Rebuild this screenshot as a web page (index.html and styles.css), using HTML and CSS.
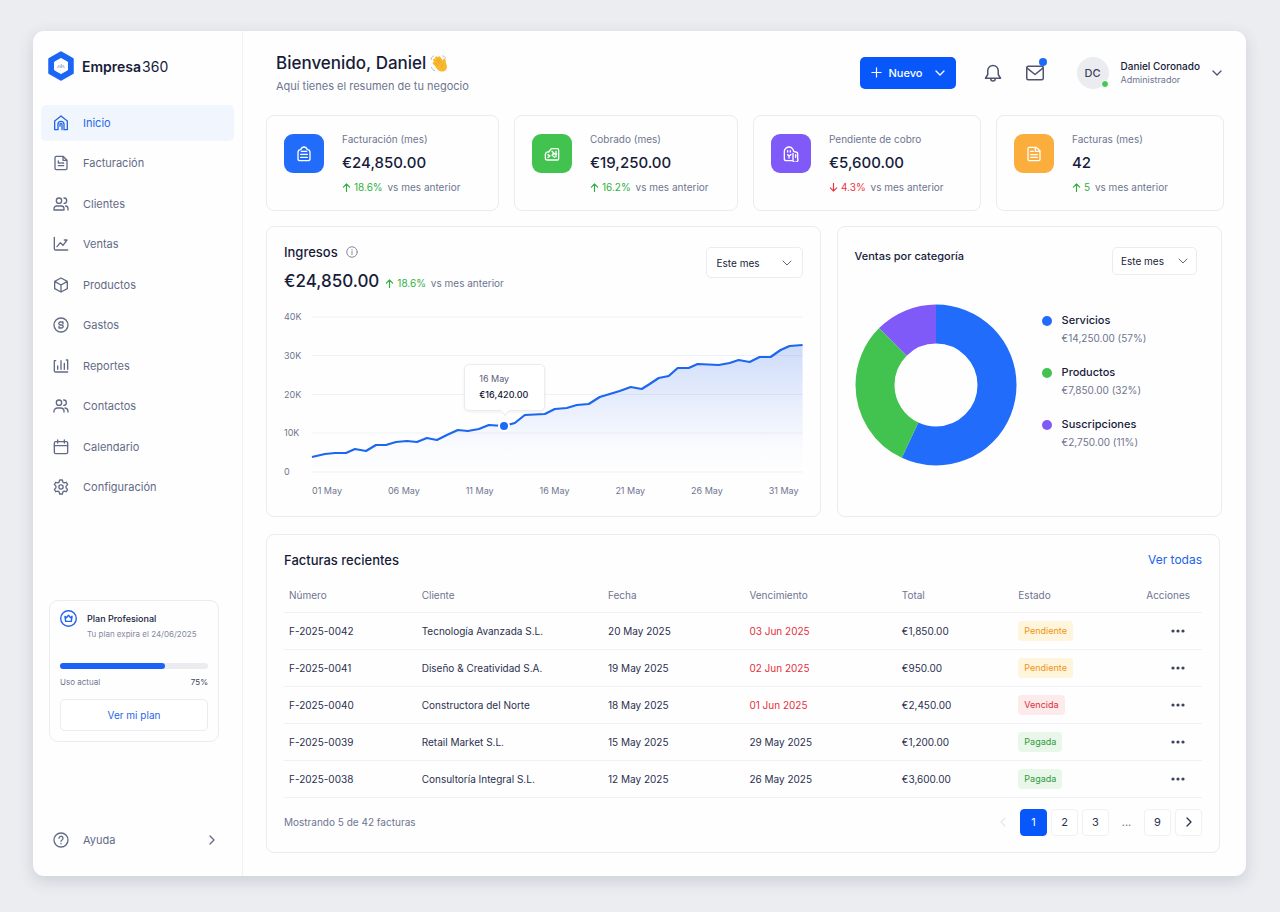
FILE: index.html
```html
<!DOCTYPE html>
<html lang="es">

<head>
    <meta charset="UTF-8">
    <meta name="viewport" content="width=device-width, initial-scale=1.0">
    <title>Empresa360 - Inicio</title>
    <link rel="stylesheet" href="styles.css">
</head>

<body>
    <div class="app">
        <aside class="sidebar">
            <a href="#" class="brand">
                <svg class="brand-logo" viewBox="0 0 26 30">
                    <path d="M13 1.500 24.500 8v14L13 28.500 1.500 22V8z" fill="#1b66f5" stroke="#1b66f5" stroke-width="2.500" stroke-linejoin="round" />
                    <path d="M13 7.500 19.500 11v8L13 22.500 6.500 19v-8z" fill="#fff" stroke="#fff" stroke-linejoin="round" />
                    <path d="M9 17l2-3v3m1 0 1.500-4v4m1.500 0v-3l1.500 3" fill="none" stroke="#b9bfd6" />
                </svg>
                <span class="brand-name"><strong>Empresa</strong>360</span>
            </a>

            <nav class="nav">
                <a href="#" class="nav-item active">
                    <svg class="icon" viewBox="0 0 24 24"><path d="M2.500 9 12 1.500 21.500 9v13h-5v-8a4.500 4.500 0 0 0-9 0v8h-5z" /><path d="M10.500 17v-3a1.500 1.500 0 0 1 3 0v8" /></svg>
                    Inicio
                </a>
                <a href="#" class="nav-item">
                    <svg class="icon" viewBox="0 0 24 24"><path d="M15 2H5a2 2 0 0 0-2 2v16a2 2 0 0 0 2 2h14a2 2 0 0 0 2-2V8zM15 2v6h6M8 9v3h3M8 16h8M13 12h3" /></svg>
                    Facturación
                </a>
                <a href="#" class="nav-item">
                    <svg class="icon" viewBox="0 0 24 24"><circle cx="9" cy="7" r="4" /><path d="M1.500 21v-2a4 4 0 0 1 4-4h7a4 4 0 0 1 4 4v2zM16.500 3a4 4 0 0 1 0 8M19 15a4 4 0 0 1 3.500 4v2" /></svg>
                    Clientes
                </a>
                <a href="#" class="nav-item">
                    <svg class="icon" viewBox="0 0 24 24"><path d="M2 2v17a2 2 0 0 0 2 2h18M6 16l5-6 4 4 6-8M17 6h4" /></svg>
                    Ventas
                </a>
                <a href="#" class="nav-item">
                    <svg class="icon" viewBox="0 0 24 24"><path d="M12 1.500 21.500 6.500v11L12 22.500l-9.500-5v-11zM2.500 6.500 12 12l9.500-5.500M12 12v10.500" /></svg>
                    Productos
                </a>
                <a href="#" class="nav-item">
                    <svg class="icon" viewBox="0 0 24 24"><circle cx="12" cy="12" r="10.500" /><path d="M15 7.500h-4a2 2 0 0 0 0 4.500h2a2 2 0 0 1 0 4.500H9M15 7.500V10M9 14v2.500" /></svg>
                    Gastos
                </a>
                <a href="#" class="nav-item">
                    <svg class="icon" viewBox="0 0 24 24"><path d="M4 4H2v15a2 2 0 0 0 2 2h18M7 17v-5M12 17V4M17 17V8M22 17V3h-2" /></svg>
                    Reportes
                </a>
                <a href="#" class="nav-item">
                    <svg class="icon" viewBox="0 0 24 24"><circle cx="9" cy="7" r="4" /><path d="M1.500 21v-1a5 5 0 0 1 5-5h5a5 5 0 0 1 5 5v1M16 3a4 4 0 0 1 0 8M18 15a5 5 0 0 1 4.500 5v1" /></svg>
                    Contactos
                </a>
                <a href="#" class="nav-item">
                    <svg class="icon" viewBox="0 0 24 24"><rect x="2" y="4" width="20" height="18" rx="2" /><path d="M2 10h20M7 1.500V6M17 1.500V6" /></svg>
                    Calendario
                </a>
                <a href="#" class="nav-item">
                    <svg class="icon" viewBox="0 0 24 24"><path d="M10 1.500h4l.8 3.200 2 1.100 3.100-.9 2 3.500-2.300 2.300v2.600l2.300 2.300-2 3.500-3.100-.9-2 1.100-.8 3.200h-4l-.8-3.200-2-1.100-3.100.9-2-3.500 2.300-2.300v-2.600L2.100 8.400l2-3.500 3.100.9 2-1.100z" /><circle cx="12" cy="12" r="3.200" /></svg>
                    Configuración
                </a>
            </nav>

            <div class="plan">
                <div class="plan-top">
                    <svg class="plan-icon" viewBox="0 0 24 24"><circle cx="12" cy="12" r="11" /><path d="M7 9l2 2 3-3.500L15 11l2-2-1 7H8z" /></svg>
                    <div>
                        <div class="plan-name">Plan Profesional</div>
                        <div class="plan-date">Tu plan expira el 24/06/2025</div>
                    </div>
                </div>
                <div class="plan-bar"><div class="plan-fill"></div></div>
                <div class="plan-usage"><span>Uso actual</span><span class="plan-percent">75%</span></div>
                <button type="button" class="plan-button">Ver mi plan</button>
            </div>

            <a href="#" class="help">
                <svg class="icon" viewBox="0 0 24 24"><circle cx="12" cy="12" r="10.500" /><path d="M9 9.500a3 3 0 1 1 4.500 2.500c-1 .6-1.500 1-1.500 2M12 17v.5" /></svg>
                <span>Ayuda</span>
                <svg class="chevron help-arrow" viewBox="0 0 10 10"><path d="M3 1l4 4-4 4" /></svg>
            </a>
        </aside>

        <main class="main">
            <header class="header">
                <div class="welcome">
                    <h1>Bienvenido, Daniel
                        <svg class="wave" viewBox="0 0 24 24">
                            <g fill="none" stroke="#f9b92f" stroke-width="3.400" stroke-linecap="round">
                                <path d="M12 14 5.500 7.500M14 12 8 4.800M16 11l-4.500-6.500M9.500 16 5 11.500M18.500 14 18 7.500" />
                            </g>
                            <path d="M8 14l7-6 5 3c2 4 2 8-1 10s-7 1.500-9.500-1.500L6.500 16z" fill="#f9b92f" />
                            <path d="M7.500 7 12 12M10 5.500l4 5.500M6.500 11l4 4M17 12c-2 1-2.500 3-2 5" fill="none" stroke="#e08f1c" stroke-width=".7" />
                            <path d="M1.500 7c0-2 1-3.500 3-4.500M16 2.500c2 .3 3 1 3.500 2.500M2 17c.5 2 2 3.500 4 4" fill="none" stroke="#9aa2ae" stroke-linecap="round" />
                        </svg>
                    </h1>
                    <p>Aquí tienes el resumen de tu negocio</p>
                </div>
                <button type="button" class="new-button">
                    <svg class="plus" viewBox="0 0 12 12"><path d="M6 1v10M1 6h10" /></svg>
                    Nuevo
                    <svg class="chevron" viewBox="0 0 10 10"><path d="M1 3l4 4 4-4" /></svg>
                </button>
                <button type="button" class="icon-button" aria-label="Notificaciones">
                    <svg class="icon" viewBox="0 0 24 24"><path d="M12 2a7 7 0 0 0-7 7v5l-3 5h20l-3-5V9a7 7 0 0 0-7-7zM9 19.500a3 3 0 0 0 6 0" /></svg>
                </button>
                <button type="button" class="icon-button" aria-label="Mensajes">
                    <svg class="icon" viewBox="0 0 24 24"><rect x="1" y="3" width="22" height="18" rx="2" /><path d="M1.500 5.500 12 14l10.500-8.500" /></svg>
                    <span class="mail-dot"></span>
                </button>
                <button type="button" class="user">
                    <span class="avatar">DC<span class="online"></span></span>
                    <span class="user-text">
                        <span class="user-name">Daniel Coronado</span>
                        <span class="user-role">Administrador</span>
                    </span>
                    <svg class="chevron" viewBox="0 0 10 10"><path d="M1 3l4 4 4-4" /></svg>
                </button>
            </header>

            <section class="stats">
                <article class="card stat">
                    <div class="stat-icon blue"><svg viewBox="0 0 24 24"><path d="M7 5.500A4 4 0 0 0 3 9v10a3 3 0 0 0 3 3h12a3 3 0 0 0 3-3V9a4 4 0 0 0-4-3.500C16 3 14.500 1.500 12 1.500S8 3 7 5.500zM8 8h8M7 12.500h10M7 17h10" /></svg></div>
                    <div>
                        <div class="stat-label">Facturación (mes)</div>
                        <div class="stat-value">€24,850.00</div>
                        <div class="delta"><span class="up"><svg class="arrow" viewBox="0 0 10 10"><path d="M5 9.500V1M1.500 4.500 5 1l3.500 3.500" /></svg>18.6%</span> vs mes anterior</div>
                    </div>
                </article>
                <article class="card stat">
                    <div class="stat-icon green"><svg viewBox="0 0 24 24"><path d="M7 9l4-5h9a2 2 0 0 1 2 2v13a2 2 0 0 1-2 2H5a3 3 0 0 1-3-3v-5a4 4 0 0 1 5-4zM6 13l3 2-3 2M12 8l3 3-3 3 4 3M18 8v8M13 12h6" /></svg></div>
                    <div>
                        <div class="stat-label">Cobrado (mes)</div>
                        <div class="stat-value">€19,250.00</div>
                        <div class="delta"><span class="up"><svg class="arrow" viewBox="0 0 10 10"><path d="M5 9.500V1M1.500 4.500 5 1l3.500 3.500" /></svg>16.2%</span> vs mes anterior</div>
                    </div>
                </article>
                <article class="card stat">
                    <div class="stat-icon purple"><svg viewBox="0 0 24 24"><path d="M15 22H5a3 3 0 0 1-3-3V9a7 7 0 0 1 14-1l3 1a3 3 0 0 1 3 3v7a3 3 0 0 1-7 3V11M7 7v2M11 7v2M7 13l2 2 3-2M9 15v3M19 13v4" /></svg></div>
                    <div>
                        <div class="stat-label">Pendiente de cobro</div>
                        <div class="stat-value">€5,600.00</div>
                        <div class="delta"><span class="down"><svg class="arrow" viewBox="0 0 10 10"><path d="M5 .5V9M1.500 5.500 5 9l3.500-3.500" /></svg>4.3%</span> vs mes anterior</div>
                    </div>
                </article>
                <article class="card stat">
                    <div class="stat-icon orange"><svg viewBox="0 0 24 24"><path d="M15 2H5a2 2 0 0 0-2 2v16a2 2 0 0 0 2 2h14a2 2 0 0 0 2-2V7zM14 2v6h6M7 8h4M7 13h10M7 17h10" /></svg></div>
                    <div>
                        <div class="stat-label">Facturas (mes)</div>
                        <div class="stat-value">42</div>
                        <div class="delta"><span class="up"><svg class="arrow" viewBox="0 0 10 10"><path d="M5 9.500V1M1.500 4.500 5 1l3.500 3.500" /></svg>5</span> vs mes anterior</div>
                    </div>
                </article>
            </section>

            <section class="charts">
                <article class="card income">
                    <div class="card-head">
                        <div>
                            <h2>Ingresos
                                <svg class="info" viewBox="0 0 24 24"><circle cx="12" cy="12" r="10.500" /><path d="M12 11v6M12 7v1" /></svg>
                            </h2>
                            <div class="income-total">
                                <span class="income-value">€24,850.00</span>
                                <span class="delta"><span class="up"><svg class="arrow" viewBox="0 0 10 10"><path d="M5 9.500V1M1.500 4.500 5 1l3.500 3.500" /></svg>18.6%</span> vs mes anterior</span>
                            </div>
                        </div>
                        <select class="select" aria-label="Periodo de ingresos">
                            <option>Este mes</option>
                        </select>
                    </div>
                    <div class="chart">
                        <div class="y-axis"><span>40K</span><span>30K</span><span>20K</span><span>10K</span><span>0</span></div>
                        <div class="plot">
                            <svg class="plot-svg" viewBox="0 0 491 155" preserveAspectRatio="none">
                                <defs>
                                    <linearGradient id="area" x1="0" y1="0" x2="0" y2="1">
                                        <stop offset="0" stop-color="#2563eb" stop-opacity=".22" />
                                        <stop offset=".8" stop-color="#2563eb" stop-opacity="0.02" />
                                        <stop offset="1" stop-color="#2563eb" stop-opacity="0" />
                                    </linearGradient>
                                </defs>
                                <path class="grid-line" d="M0 0H491M0 38.500H491M0 77.500H491M0 116H491M0 155H491" />
                                <path fill="url(#area)" d="M0 140 13 137 23 136 34 136 43 132 54 134 64 128 74 128 84 125 95 124 105 125 115 121 125 123 135 118 146 113 156 114 167 112 177 108 192 109 203 106 213 98 233 97 243 92 255 91 265 88 277 87 288 80 308 74 319 70 330 72 338 67 347 61 357 59 366 51 377 51 386 47 407 48 418 46 427 43 438 45 448 40 459 40 469 33 478 29 491 28V155H0z" />
                                <path class="line" d="M0 140 13 137 23 136 34 136 43 132 54 134 64 128 74 128 84 125 95 124 105 125 115 121 125 123 135 118 146 113 156 114 167 112 177 108 192 109 203 106 213 98 233 97 243 92 255 91 265 88 277 87 288 80 308 74 319 70 330 72 338 67 347 61 357 59 366 51 377 51 386 47 407 48 418 46 427 43 438 45 448 40 459 40 469 33 478 29 491 28" />
                            </svg>
                            <div class="point"></div>
                            <div class="tooltip"><span>16 May</span><strong>€16,420.00</strong></div>
                        </div>
                    </div>
                    <div class="x-axis"><span>01 May</span><span>06 May</span><span>11 May</span><span>16 May</span><span>21 May</span><span>26 May</span><span>31 May</span></div>
                </article>

                <article class="card categories">
                    <div class="card-head">
                        <h2 class="small-title">Ventas por categoría</h2>
                        <select class="select select-small" aria-label="Periodo de ventas">
                            <option>Este mes</option>
                        </select>
                    </div>
                    <div class="donut-row">
                        <svg class="donut" viewBox="0 0 162 162">
                            <g fill="none" stroke-width="39" transform="rotate(-90 81 81)">
                                <circle cx="81" cy="81" r="61" pathLength="1000" stroke="#226cfb" stroke-dasharray="570 430" />
                                <circle cx="81" cy="81" r="61" pathLength="1000" stroke="#42c34f" stroke-dasharray="305 695" stroke-dashoffset="-570" />
                                <circle cx="81" cy="81" r="61" pathLength="1000" stroke="#805af8" stroke-dasharray="125 875" stroke-dashoffset="-875" />
                            </g>
                        </svg>
                        <ul class="legend">
                            <li><span class="dot blue"></span><div>Servicios<small>€14,250.00 (57%)</small></div></li>
                            <li><span class="dot green"></span><div>Productos<small>€7,850.00 (32%)</small></div></li>
                            <li><span class="dot purple"></span><div>Suscripciones<small>€2,750.00 (11%)</small></div></li>
                        </ul>
                    </div>
                </article>
            </section>

            <section class="card invoices">
                <div class="invoices-head">
                    <h2>Facturas recientes</h2>
                    <a href="#">Ver todas</a>
                </div>
                <table>
                    <thead>
                        <tr>
                            <th class="col-number">Número</th>
                            <th class="col-client">Cliente</th>
                            <th class="col-date">Fecha</th>
                            <th class="col-due">Vencimiento</th>
                            <th class="col-total">Total</th>
                            <th class="col-status">Estado</th>
                            <th class="col-actions">Acciones</th>
                        </tr>
                    </thead>
                    <tbody>
                        <tr>
                            <td>F-2025-0042</td>
                            <td>Tecnología Avanzada S.L.</td>
                            <td>20 May 2025</td>
                            <td class="late">03 Jun 2025</td>
                            <td>€1,850.00</td>
                            <td><span class="badge pending">Pendiente</span></td>
                            <td><button type="button" class="more" aria-label="Acciones"><svg viewBox="0 0 14 4"><circle cx="2" cy="2" r="1.600" /><circle cx="7" cy="2" r="1.600" /><circle cx="12" cy="2" r="1.600" /></svg></button></td>
                        </tr>
                        <tr>
                            <td>F-2025-0041</td>
                            <td>Diseño &amp; Creatividad S.A.</td>
                            <td>19 May 2025</td>
                            <td class="late">02 Jun 2025</td>
                            <td>€950.00</td>
                            <td><span class="badge pending">Pendiente</span></td>
                            <td><button type="button" class="more" aria-label="Acciones"><svg viewBox="0 0 14 4"><circle cx="2" cy="2" r="1.600" /><circle cx="7" cy="2" r="1.600" /><circle cx="12" cy="2" r="1.600" /></svg></button></td>
                        </tr>
                        <tr>
                            <td>F-2025-0040</td>
                            <td>Constructora del Norte</td>
                            <td>18 May 2025</td>
                            <td class="late">01 Jun 2025</td>
                            <td>€2,450.00</td>
                            <td><span class="badge overdue">Vencida</span></td>
                            <td><button type="button" class="more" aria-label="Acciones"><svg viewBox="0 0 14 4"><circle cx="2" cy="2" r="1.600" /><circle cx="7" cy="2" r="1.600" /><circle cx="12" cy="2" r="1.600" /></svg></button></td>
                        </tr>
                        <tr>
                            <td>F-2025-0039</td>
                            <td>Retail Market S.L.</td>
                            <td>15 May 2025</td>
                            <td>29 May 2025</td>
                            <td>€1,200.00</td>
                            <td><span class="badge paid">Pagada</span></td>
                            <td><button type="button" class="more" aria-label="Acciones"><svg viewBox="0 0 14 4"><circle cx="2" cy="2" r="1.600" /><circle cx="7" cy="2" r="1.600" /><circle cx="12" cy="2" r="1.600" /></svg></button></td>
                        </tr>
                        <tr>
                            <td>F-2025-0038</td>
                            <td>Consultoría Integral S.L.</td>
                            <td>12 May 2025</td>
                            <td>26 May 2025</td>
                            <td>€3,600.00</td>
                            <td><span class="badge paid">Pagada</span></td>
                            <td><button type="button" class="more" aria-label="Acciones"><svg viewBox="0 0 14 4"><circle cx="2" cy="2" r="1.600" /><circle cx="7" cy="2" r="1.600" /><circle cx="12" cy="2" r="1.600" /></svg></button></td>
                        </tr>
                    </tbody>
                </table>
                <div class="invoices-foot">
                    <span>Mostrando 5 de 42 facturas</span>
                    <div class="pages">
                        <button type="button" class="page prev" aria-label="Anterior" disabled><svg class="chevron" viewBox="0 0 10 10"><path d="M7 1 3 5l4 4" /></svg></button>
                        <button type="button" class="page current">1</button>
                        <button type="button" class="page">2</button>
                        <button type="button" class="page">3</button>
                        <span class="page-gap">...</span>
                        <button type="button" class="page">9</button>
                        <button type="button" class="page" aria-label="Siguiente"><svg class="chevron" viewBox="0 0 10 10"><path d="M3 1l4 4-4 4" /></svg></button>
                    </div>
                </div>
            </section>
        </main>
    </div>
</body>

</html>
```
FILE: styles.css
```css
:root {
    --primary: #0757fb;
    --blue: #226cfb;
    --green: #42c34f;
    --purple: #805af8;
    --orange: #fbae3c;
    --text: #171c3a;
    --muted: #6e7591;
    --border: #ebecf1;
}

* {
    box-sizing: border-box;
}

body {
    margin: 0;
    padding: 31px 34px 36px 33px;
    min-height: 100vh;
    display: flex;
    background: #ebedf1;
    color: var(--text);
    font-family: Inter, "Liberation Sans", sans-serif;
    font-size: 10px;
}

h1,
h2,
p,
ul {
    margin: 0;
    padding: 0;
}

a {
    color: inherit;
    text-decoration: none;
}

button,
select {
    font-family: inherit;
    color: inherit;
    cursor: pointer;
}

svg {
    flex-shrink: 0;
}

.app {
    flex: 1;
    min-width: 0;
    display: flex;
    background: #fefefe;
    border-radius: 11px;
    box-shadow: 0 5px 16px rgba(40, 50, 80, 0.16);
}

.icon,
.info,
.plan-icon,
.plus,
.chevron,
.arrow,
.stat-icon svg {
    fill: none;
    stroke: currentColor;
    stroke-width: 2;
    stroke-linecap: round;
    stroke-linejoin: round;
}

.icon {
    width: 16px;
    height: 16px;
}

.chevron {
    width: 10px;
    height: 10px;
    stroke-width: 1.3;
}

.arrow {
    width: 9px;
    height: 9px;
    stroke-width: 1.3;
    margin: 0 3px -1px 0;
}

/* sidebar */
.sidebar {
    width: 210px;
    flex-shrink: 0;
    display: flex;
    flex-direction: column;
    padding: 20px 8px 26px;
    border-right: 1px solid #f0f1f5;
}

.brand {
    display: flex;
    align-items: center;
    gap: 8px;
    padding-left: 7px;
    margin-bottom: 24px;
}

.brand-logo {
    width: 26px;
    height: 30px;
}

.brand-name {
    font-size: 14px;
}

.brand-name strong {
    font-weight: 600;
    margin-right: 1px;
}

.nav {
    height: 400px;
    display: flex;
    flex-direction: column;
    justify-content: space-between;
}

.nav-item {
    display: flex;
    align-items: center;
    gap: 14px;
    height: 36px;
    padding: 0 12px;
    border-radius: 5px;
    font-size: 11px;
    color: #636a85;
}

.nav-item.active {
    background: #f1f6fe;
    color: #2566e8;
}

.plan {
    margin: 95px 15px 0 8px;
    padding: 9px 10px 10px;
    border: 1px solid var(--border);
    border-radius: 9px;
}

.plan-top {
    display: flex;
    gap: 10px;
}

.plan-icon {
    width: 17px;
    height: 17px;
    color: #2566e8;
}

.plan-name {
    font-size: 9px;
    font-weight: 500;
    line-height: 17px;
}

.plan-date {
    font-size: 8px;
    line-height: 15px;
    color: #858a9e;
    white-space: nowrap;
}

.plan-bar {
    margin-top: 21px;
    height: 6px;
    border-radius: 3px;
    background: #ececf0;
}

.plan-fill {
    width: 71%;
    height: 100%;
    border-radius: 3px;
    background: #1c62f7;
}

.plan-usage {
    display: flex;
    justify-content: space-between;
    margin: 6px 0 10px;
    font-size: 8px;
    line-height: 14px;
    color: var(--muted);
}

.plan-percent {
    color: #3d435c;
}

.plan-button {
    width: 100%;
    height: 32px;
    background: #fff;
    border: 1px solid var(--border);
    border-radius: 5px;
    font-size: 10px;
    color: #2566e8;
}

.help {
    display: flex;
    align-items: center;
    gap: 14px;
    margin-top: auto;
    padding: 2px 17px 2px 12px;
    font-size: 11px;
    color: #636a85;
}

.help-arrow {
    margin-left: auto;
}

/* header */
.main {
    flex: 1;
    min-width: 0;
    padding: 20px 24px 23px 23px;
}

.header {
    display: flex;
    align-items: center;
    padding: 0 0 21px 10px;
}

.welcome {
    margin-right: auto;
}

.welcome h1 {
    display: flex;
    align-items: center;
    gap: 4px;
    font-size: 17px;
    line-height: 25px;
    font-weight: 500;
}

.wave {
    width: 19px;
    height: 19px;
}

.welcome p {
    margin-top: 2px;
    font-size: 11px;
    line-height: 16px;
    color: var(--muted);
}

.new-button {
    display: flex;
    align-items: center;
    gap: 7px;
    height: 32px;
    padding: 0 11px;
    background: var(--primary);
    border: 0;
    border-radius: 5px;
    color: #fff;
    font-size: 11px;
    font-weight: 500;
}

.new-button .plus {
    width: 11px;
    height: 11px;
    stroke-width: 1.3;
}

.new-button .chevron {
    margin-left: 5px;
}

.icon-button {
    position: relative;
    display: flex;
    margin-left: 24px;
    padding: 0;
    background: none;
    border: 0;
    color: #4d546f;
}

.new-button + .icon-button {
    margin-left: 28px;
}

.icon-button .icon {
    width: 18px;
    height: 18px;
}

.mail-dot {
    position: absolute;
    top: -6px;
    right: -3px;
    width: 8px;
    height: 8px;
    border-radius: 50%;
    background: #1c6bf7;
}

.user {
    display: flex;
    align-items: center;
    gap: 12px;
    margin-left: 33px;
    padding: 0;
    background: none;
    border: 0;
    text-align: left;
}

.user .chevron {
    color: #4d546f;
}

.avatar {
    position: relative;
    width: 32px;
    height: 32px;
    border-radius: 50%;
    background: #ebecef;
    color: #3d435c;
    font-size: 11px;
    font-weight: 500;
    line-height: 32px;
    text-align: center;
}

.online {
    position: absolute;
    right: 0;
    bottom: 1px;
    width: 8px;
    height: 8px;
    border-radius: 50%;
    background: #47c65b;
    border: 1px solid #fff;
}

.user-text {
    font-size: 10px;
    line-height: 14px;
}

.user-name,
.user-role {
    display: block;
}

.user-name {
    font-weight: 500;
}

.user-role {
    font-size: 9px;
    color: var(--muted);
}

/* cards */
.card {
    border: 1px solid var(--border);
    border-radius: 8px;
    background: #fefefe;
}

.stats {
    display: grid;
    grid-template-columns: minmax(0, 233fr) minmax(0, 224fr) minmax(0, 228fr) minmax(0, 228fr);
    gap: 15px;
    margin-right: -2px;
}

.stat {
    display: flex;
    gap: 18px;
    padding: 15px 17px 14px;
    white-space: nowrap;
}

.stat-icon {
    display: flex;
    align-items: center;
    justify-content: center;
    flex-shrink: 0;
    width: 40px;
    height: 39px;
    margin-top: 3px;
    border-radius: 9px;
    color: #fff;
}

.stat-icon svg {
    width: 16px;
    height: 16px;
}

.blue {
    background: var(--blue);
}

.green {
    background: var(--green);
}

.purple {
    background: var(--purple);
}

.orange {
    background: var(--orange);
}

.stat-label {
    line-height: 16px;
    color: var(--muted);
}

.stat-value {
    margin: 4px 0;
    font-size: 15px;
    font-weight: 500;
    line-height: 24px;
}

.delta {
    line-height: 17px;
    color: var(--muted);
}

.up,
.down {
    margin-right: 2px;
    color: #30b03c;
}

.down {
    color: #ee3440;
}

.charts {
    display: grid;
    grid-template-columns: minmax(0, 554fr) minmax(0, 385fr);
    gap: 16px;
    margin: 15px 0 17px;
}

.card-head {
    display: flex;
    justify-content: space-between;
    align-items: flex-start;
}

.card h2 {
    display: flex;
    align-items: center;
    gap: 8px;
    font-size: 13px;
    font-weight: 500;
    line-height: 18px;
}

.income {
    padding: 16px 17px 18px;
}

.info {
    width: 12px;
    height: 12px;
    color: #858a9e;
}

.income-total {
    display: flex;
    align-items: baseline;
    gap: 6px;
    margin-top: 8px;
    line-height: 24px;
}

.income-value {
    font-size: 17px;
    font-weight: 500;
}

.select {
    appearance: none;
    width: 97px;
    height: 31px;
    margin-top: 4px;
    padding: 0 10px;
    border: 1px solid var(--border);
    border-radius: 5px;
    background: #fff url("data:image/svg+xml,%3Csvg xmlns='http://www.w3.org/2000/svg' viewBox='0 0 10 10'%3E%3Cpath d='M1 3l4 4 4-4' fill='none' stroke='%23606780' stroke-linecap='round'/%3E%3C/svg%3E") no-repeat right 10px center / 10px;
    font-size: 10px;
}

.chart {
    display: flex;
    margin-top: 24px;
    height: 155px;
}

.y-axis {
    width: 28px;
    flex-shrink: 0;
    display: flex;
    flex-direction: column;
    justify-content: space-between;
    margin: -6px 0;
    font-size: 9px;
    line-height: 12px;
    color: var(--muted);
}

.plot {
    position: relative;
    flex: 1;
}

.plot-svg {
    display: block;
    width: 100%;
    height: 100%;
    overflow: visible;
}

.grid-line {
    fill: none;
    stroke: #f0f1f4;
    vector-effect: non-scaling-stroke;
}

.line {
    fill: none;
    stroke: #1c66f0;
    stroke-width: 2.2;
    stroke-linejoin: round;
    vector-effect: non-scaling-stroke;
}

.point {
    position: absolute;
    left: 39.2%;
    top: 70%;
    width: 12px;
    height: 12px;
    margin: -6px;
    border: 2px solid #fff;
    border-radius: 50%;
    background: #1c6bf7;
}

.tooltip {
    position: absolute;
    left: 39.2%;
    bottom: 61px;
    width: 81px;
    margin-left: -40px;
    padding: 6px 0 7px 14px;
    background: #fff;
    border: 1px solid var(--border);
    border-radius: 5px;
    box-shadow: 0 1px 3px rgba(40, 50, 80, 0.08);
    font-size: 9px;
    line-height: 16px;
    color: #5a607a;
}

.tooltip::after {
    content: "";
    position: absolute;
    left: 50%;
    bottom: -4px;
    width: 7px;
    height: 7px;
    margin-left: -4px;
    background: #fff;
    border: solid var(--border);
    border-width: 0 1px 1px 0;
    transform: rotate(45deg);
}

.tooltip span,
.tooltip strong {
    display: block;
}

.tooltip strong {
    font-weight: 500;
    color: var(--text);
}

.x-axis {
    display: flex;
    justify-content: space-between;
    margin: 12px 4px 0 28px;
    font-size: 9px;
    line-height: 14px;
    color: var(--muted);
}

.categories {
    padding: 16px 24px 17px 17px;
}

.card .small-title {
    margin-top: 4px;
    font-size: 11px;
}

.select-small {
    width: 85px;
    height: 28px;
    padding: 0 8px;
    background-position: right 8px center;
}

.donut-row {
    display: flex;
    align-items: center;
    gap: 25px;
    margin-top: 29px;
}

.donut {
    width: 162px;
    height: 162px;
}

.legend {
    display: flex;
    flex-direction: column;
    gap: 17px;
    margin-bottom: 7px;
    list-style: none;
    font-size: 11px;
    font-weight: 500;
    line-height: 17px;
}

.legend li {
    display: flex;
    gap: 10px;
}

.legend small {
    display: block;
    font-size: 10px;
    font-weight: 400;
    line-height: 18px;
    color: var(--muted);
}

.dot {
    width: 10px;
    height: 10px;
    margin-top: 4px;
    border-radius: 50%;
}

/* invoices */
.invoices {
    padding: 16px 17px;
    margin-right: 2px;
}

.invoices-head {
    display: flex;
    justify-content: space-between;
    align-items: center;
    margin-bottom: 10px;
}

.invoices-head a {
    font-size: 12px;
    line-height: 18px;
    color: #1c62e8;
}

table {
    width: 100%;
    border-collapse: collapse;
    table-layout: fixed;
}

th,
td {
    height: 37px;
    padding: 0;
    border-bottom: 1px solid #f0f1f4;
    text-align: left;
    font-weight: 400;
    color: #2a3050;
    white-space: nowrap;
}

th {
    height: 33px;
    color: var(--muted);
}

th:first-child,
td:first-child {
    padding-left: 5px;
}

th:last-child,
td:last-child {
    padding-right: 12px;
    text-align: right;
}

.col-number {
    width: 15%;
}

.col-client {
    width: 20.3%;
}

.col-date {
    width: 15.4%;
}

.col-due {
    width: 16.6%;
}

.col-total {
    width: 12.7%;
}

.col-status {
    width: 10%;
}

td.late {
    color: #e5303c;
}

.badge {
    display: inline-block;
    padding: 0 6px;
    border-radius: 4px;
    font-size: 9px;
    line-height: 20px;
}

.pending {
    background: #fff5dc;
    color: #ef9414;
}

.overdue {
    background: #fdeaea;
    color: #d92f3a;
}

.paid {
    background: #e8f7e9;
    color: #2f9a3c;
}

.more {
    display: inline-flex;
    align-items: center;
    justify-content: center;
    width: 24px;
    height: 20px;
    padding: 0;
    background: none;
    border: 0;
    vertical-align: middle;
}

.more svg {
    width: 14px;
    height: 4px;
    fill: #3d435c;
}

.invoices-foot {
    display: flex;
    justify-content: space-between;
    align-items: center;
    padding-top: 11px;
    color: var(--muted);
}

.pages {
    display: flex;
    gap: 4px;
}

.page,
.page-gap {
    display: flex;
    align-items: center;
    justify-content: center;
    width: 27px;
    height: 27px;
    padding: 0;
    font-size: 11px;
}

.page {
    background: #fff;
    border: 1px solid #f0f1f4;
    border-radius: 4px;
    color: #2a3050;
}

.page.current {
    background: var(--primary);
    border-color: var(--primary);
    color: #fff;
}

.page.prev {
    border-color: transparent;
    opacity: 0.1;
}
```
